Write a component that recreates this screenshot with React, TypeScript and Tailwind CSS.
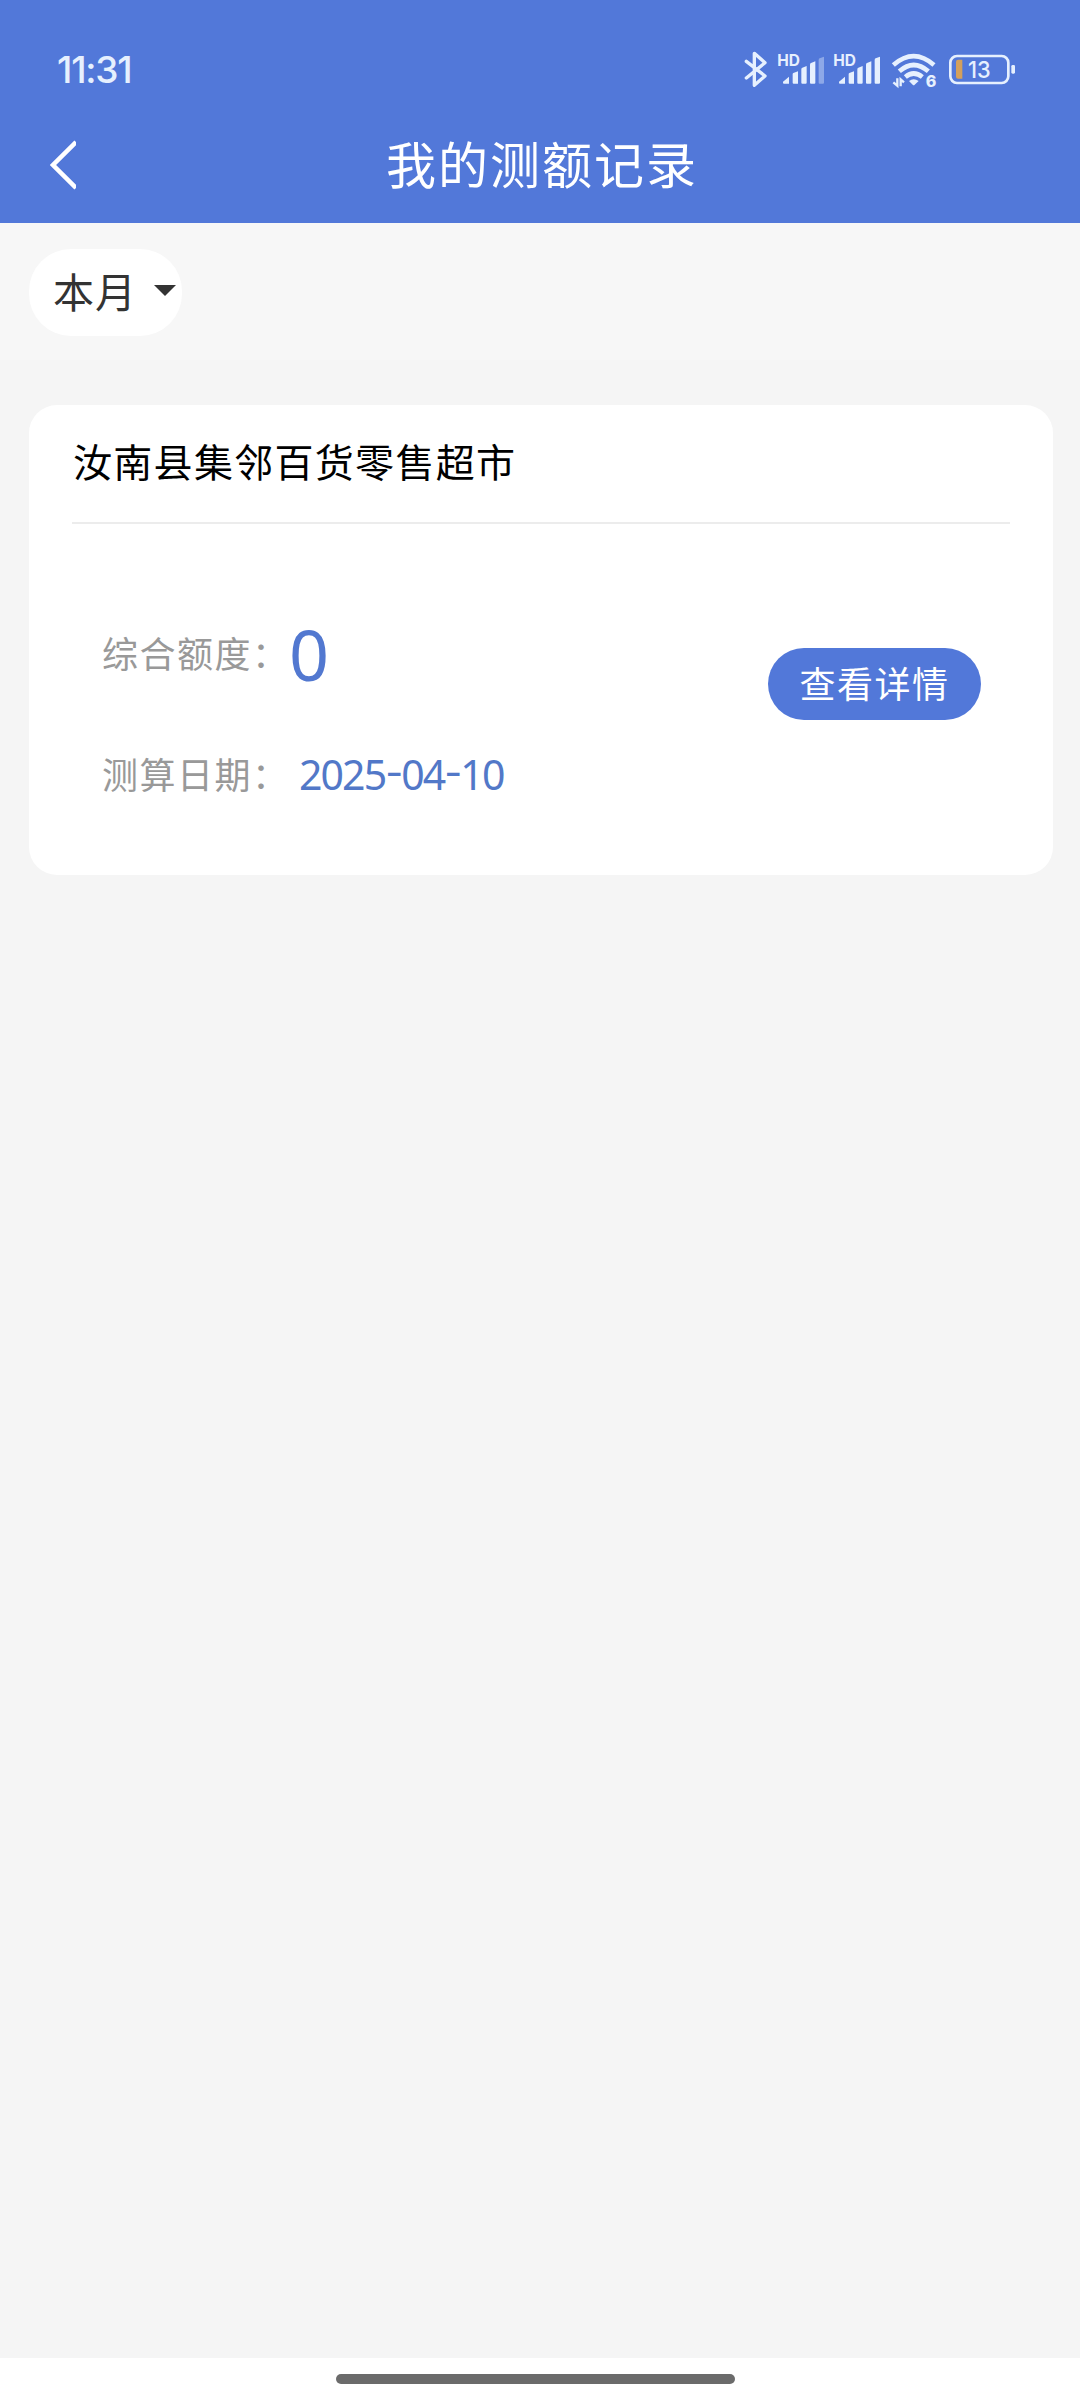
const zh = "font-['Noto_Sans_CJK_SC',sans-serif]";

const records = [
  { shop: '汝南县集邻百货零售超市', amount: '0', date: '2025-04-10' }
];

function BluetoothIcon() {
  return (
    <svg className="h-10 w-[26px]" viewBox="69 60 78 120" fill="none" stroke="#e6f0fe" strokeWidth="10" strokeLinejoin="round" strokeLinecap="round">
      <path d="M79 94 L135 138 L103 166 V70 L135 98 L79 144" />
    </svg>
  );
}

function SignalIcon({ weak = false }: { weak?: boolean }) {
  return (
    <svg className="h-10 w-12" viewBox="0 60 144 120" fill="#e6f0fe">
      <text x="1" y="108" fontSize="46" fontWeight="700" fontFamily="Inter, sans-serif" textLength="68" lengthAdjust="spacingAndGlyphs">
        HD
      </text>
      <path d="M18 155 L36 140 V161 H21 Q18 161 18 158 Z" />
      <path d="M47 132 Q47 130 49 129 L63 124 V161 H50 Q47 161 47 158 Z" />
      <path d="M73 118 Q73 114 76 113 L89 108 V158 Q89 161 86 161 H76 Q73 161 73 158 Z" />
      <path d="M99 104 Q99 100 102 99 L115 94 V158 Q115 161 112 161 H102 Q99 161 99 158 Z" />
      <path opacity={weak ? 0.4 : 1} d="M125 90 Q125 86 128 85 L141 80 V158 Q141 161 138 161 H128 Q125 161 125 158 Z" />
    </svg>
  );
}

function WifiIcon() {
  return (
    <svg className="h-10 w-[46px]" viewBox="513 60 138 120" fill="none" stroke="#e6f0fe" strokeWidth="14">
      <path d="M520 105 Q581 52 642 105" />
      <path d="M538 124 Q581 86 625 124" />
      <path d="M556 141 Q581 120 607 141" />
      <path d="M567 153 Q581 142 596 153 L584 164 Q581 167 578 164 Z" fill="#e6f0fe" stroke="none" />
      <path d="M532 145 V167 L520 157 M542 169 V148 L552 157" strokeWidth="7" />
      <text x="617" y="170" fontSize="48" fontWeight="800" fontFamily="Inter, sans-serif" fill="#e6f0fe" stroke="none">
        6
      </text>
    </svg>
  );
}

function BatteryIcon() {
  return (
    <svg className="h-10 w-[68px]" viewBox="684 60 204 120">
      <rect x="691" y="78" width="174" height="81" rx="20" fill="none" stroke="#e6f0fe" strokeWidth="8" />
      <path d="M714 89 H727 V146 H714 Q708 146 708 140 V95 Q708 89 714 89 Z" fill="#d3a05c" />
      <rect x="874" y="105" width="11" height="26" rx="4" fill="#e6f0fe" />
      <text x="744" y="144" fontSize="68" fontWeight="500" fontFamily="Inter, sans-serif" fill="#e6f0fe" textLength="68" lengthAdjust="spacingAndGlyphs">
        13
      </text>
    </svg>
  );
}

function StatusBar() {
  return (
    <div className="flex h-[119px] items-start pl-[57px] pr-16 pt-[50px]">
      <span className="font-['Inter',sans-serif] text-[37px] font-medium leading-10 tracking-[-1.2px] text-[#e6f0fe]">
        11:31
      </span>
      <div className="ml-auto flex">
        <BluetoothIcon />
        <div className="ml-2 flex gap-2">
          <SignalIcon weak />
          <SignalIcon />
        </div>
        <div className="ml-2.5 flex gap-[11px]">
          <WifiIcon />
          <BatteryIcon />
        </div>
      </div>
    </div>
  );
}

function RecordCard({ shop, amount, date }: (typeof records)[number]) {
  return (
    <article className="h-[470px] rounded-[28px] bg-white px-[43px]">
      <h2 className="h-[119px] whitespace-nowrap border-b-2 border-[#ececec] pl-px pt-[25px] text-[39px] leading-[60px] tracking-[1.3px] text-black">
        {shop}
      </h2>
      <div className="flex pl-[30px] pr-[29px]">
        <div className="whitespace-nowrap pt-[95px] text-[36px] leading-[70px] tracking-[1.5px] text-[#999999]">
          <div className="flex h-[70px]">
            <span className="-mt-0.5 w-[187px]">综合额度：</span>
            <span className="font-['Noto_Sans',sans-serif] text-[70px] tracking-normal text-[#5278d0]">
              {amount}
            </span>
          </div>
          <div className="mt-[49px] flex h-[70px]">
            <span className="w-[197px]">测算日期：</span>
            <span className="flex pt-px font-['Noto_Sans',sans-serif] text-[41px] tracking-[-1.9px] text-[#5278c8]">
              {date.split(/(-)/).map((part, i) => (
                <span key={i} className={part === '-' ? 'w-4 -translate-y-1 scale-x-125 text-center' : ''}>
                  {part}
                </span>
              ))}
            </span>
          </div>
        </div>
        <button className="ml-auto mt-[124px] h-[72px] w-[213px] rounded-full bg-[#5278d9] pb-1 text-[36px] leading-[68px] tracking-[1.5px] text-white">
          查看详情
        </button>
      </div>
    </article>
  );
}

export default function App() {
  return (
    <main className={`${zh} flex h-[2400px] w-[1080px] flex-col overflow-hidden bg-[#f5f5f5]`}>
      {/* Header */}
      <header className="h-[223px] bg-[#5278d9]">
        <StatusBar />
        <div className="flex h-[86px] items-center pl-[50px]">
          <svg className="mt-1.5 h-[50px] w-[26px]" viewBox="0 0 26 50" fill="none" stroke="white" strokeWidth="4.5">
            <path d="M26 2 L3 25 L26 48" />
          </svg>
          <h1 className="flex-1 pr-[72px] text-center text-[50px] leading-[60px] tracking-[2px] text-white">
            我的测额记录
          </h1>
        </div>
      </header>

      {/* Filter */}
      <div className="h-[137px] bg-[#f7f7f7] px-[29px] pt-[26px]">
        <button className="flex h-[87px] w-[153px] items-center rounded-[42px] bg-white pl-6 text-[41px] leading-[60px] text-[#333333]">
          <span className="-mt-1.5 tracking-[1px]">本月</span>
          <svg className="-mt-1 ml-[17px] h-[11px] w-[22px]" viewBox="0 0 22 11" fill="#333333">
            <path d="M0 0 H22 L11 11 Z" />
          </svg>
        </button>
      </div>

      {/* Records */}
      <section className="flex-1 pl-[29px] pr-[27px] pt-[45px]">
        {records.map((record) => (
          <RecordCard key={record.shop} {...record} />
        ))}
      </section>

      {/* Home indicator */}
      <footer className="h-[42px] bg-white pl-[336px] pt-4">
        <div className="h-2.5 w-[399px] rounded-full bg-[#6b6b6b]" />
      </footer>
    </main>
  );
}
